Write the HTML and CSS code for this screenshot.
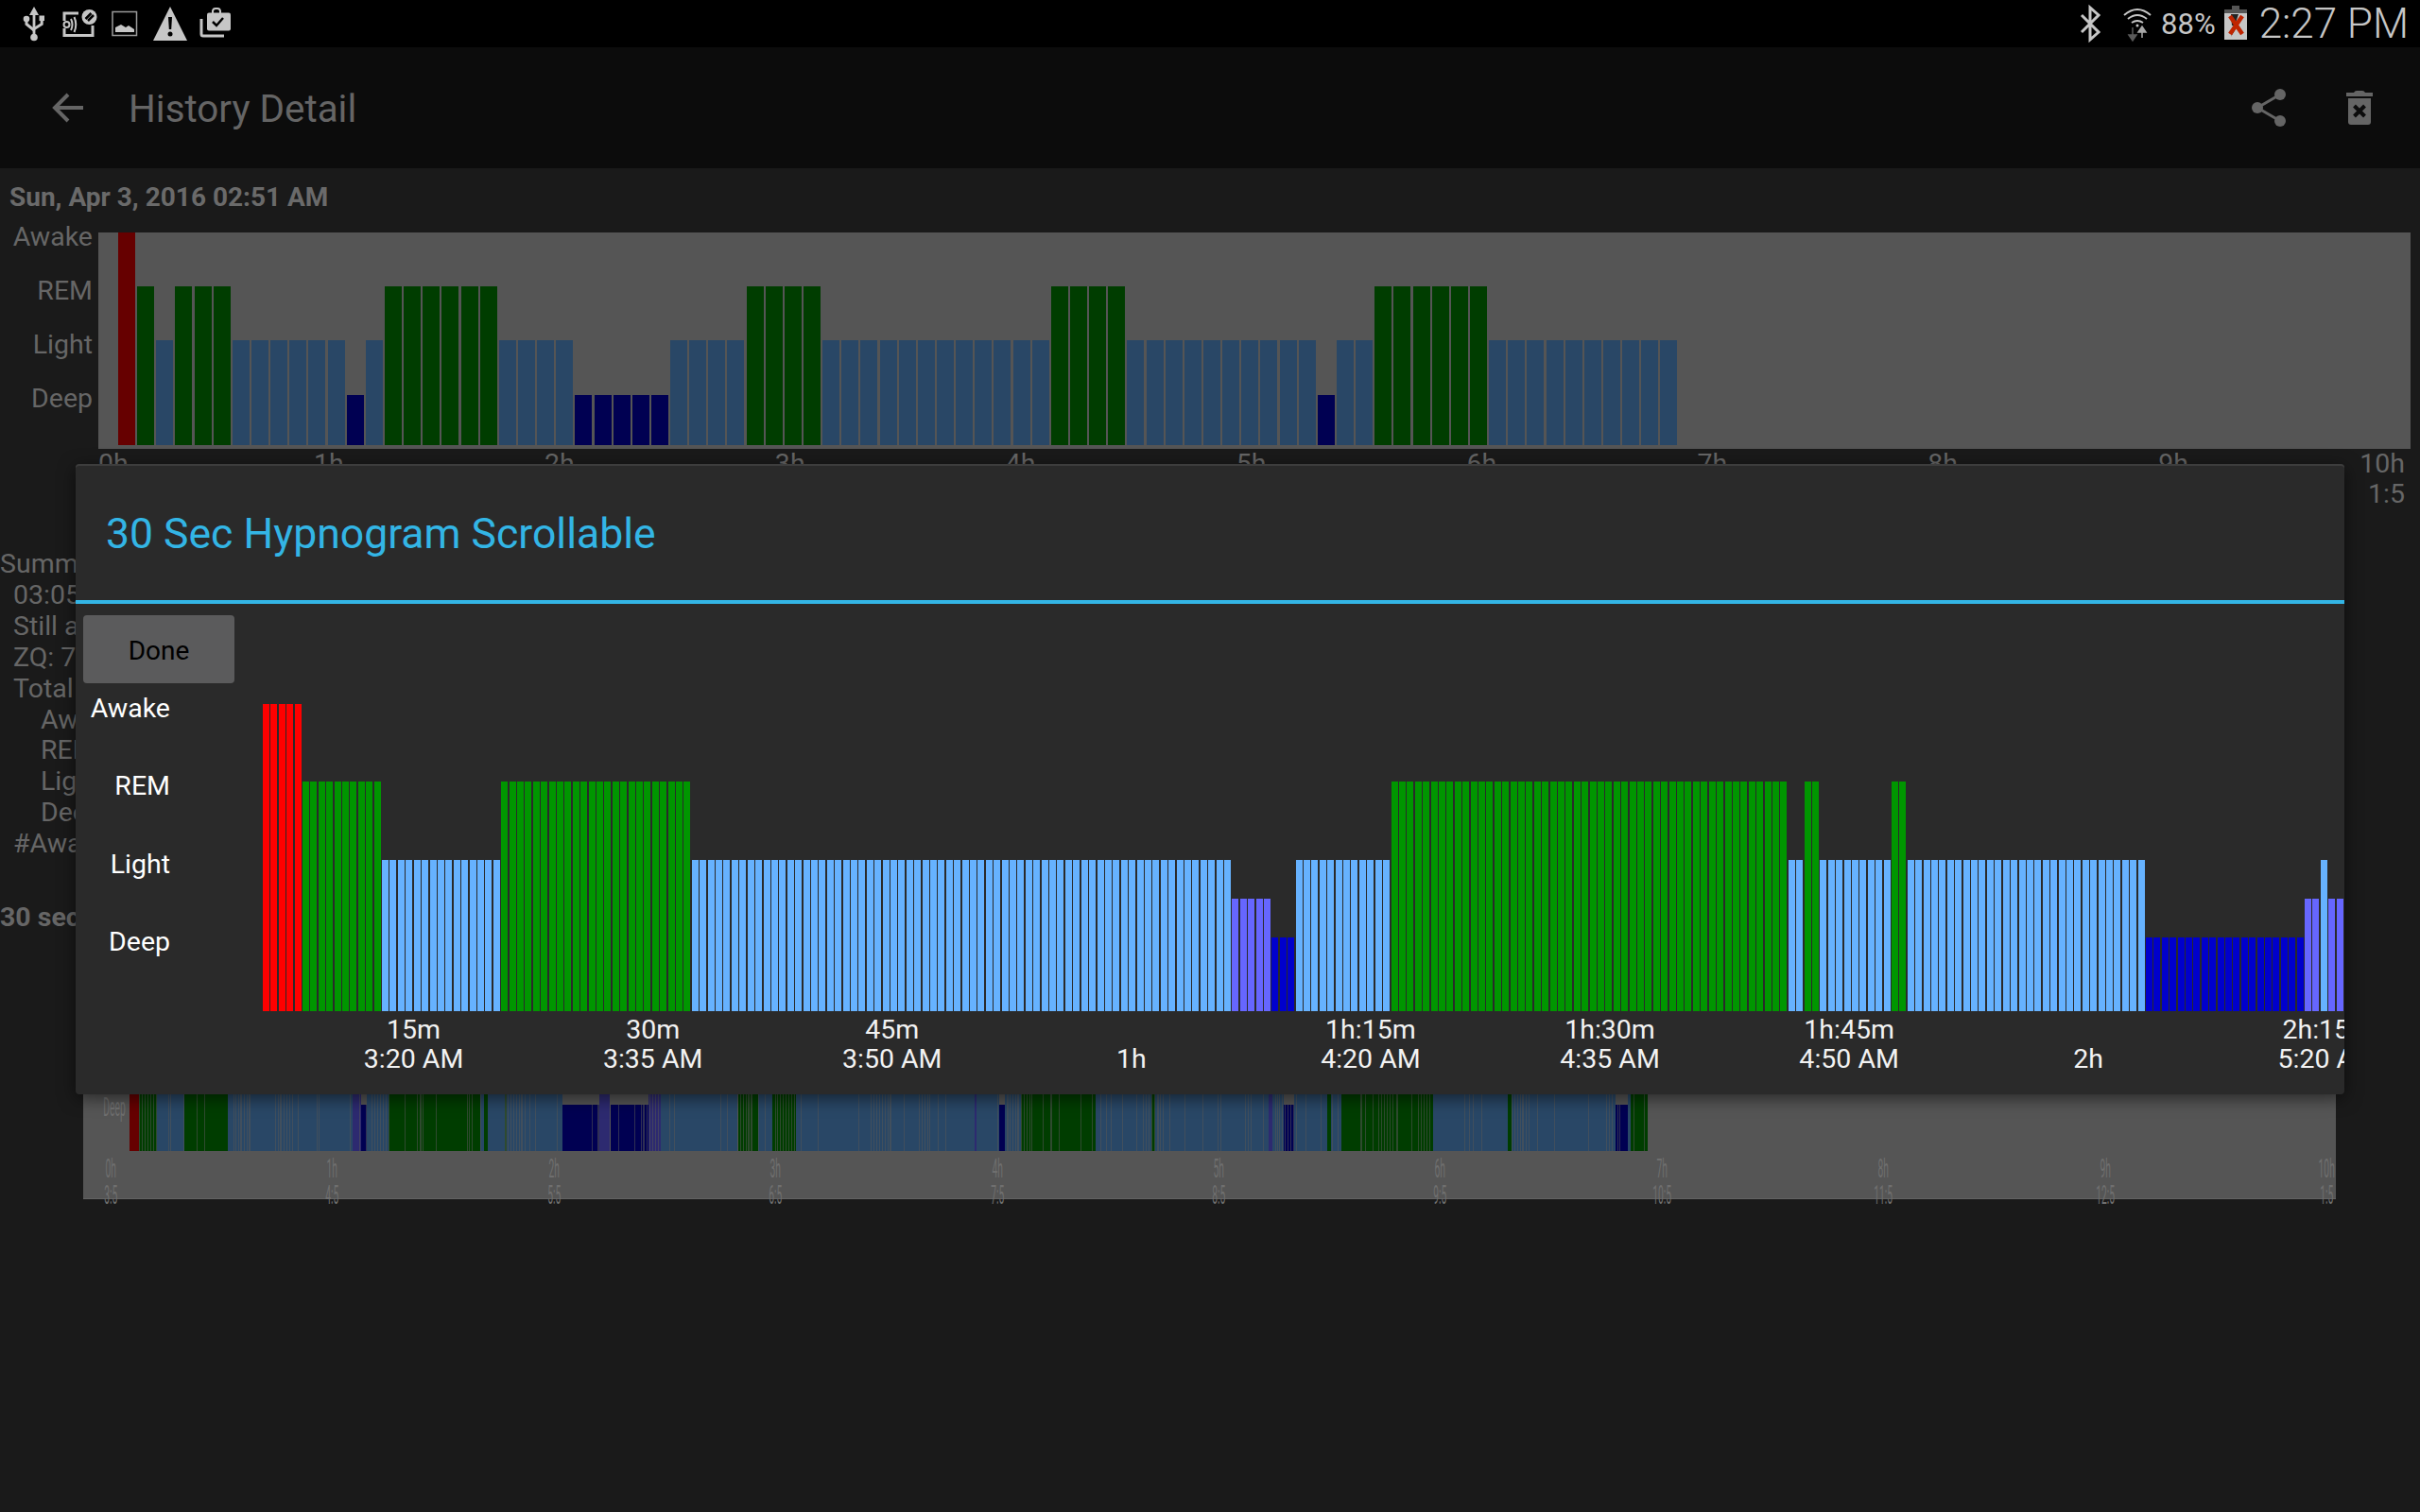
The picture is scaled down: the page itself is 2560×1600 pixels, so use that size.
FILE: index.html
```html
<!DOCTYPE html>
<html lang="en">
<head>
<meta charset="utf-8">
<title>History Detail</title>
<link rel="stylesheet" href="styles.css">
</head>
<body>
<div class="status">
  <div class="status-left">
    <svg class="ic" width="32" height="50" viewBox="20 0 32 50"><path d="M36 7l-5 9h3.6v20h2.8V16H41z" class="sf"/><circle cx="36" cy="39.500" r="3.800" class="sf"/><circle cx="28" cy="20" r="3.300" class="sf"/><rect x="41.500" y="16.500" width="5.500" height="5.500" class="sf"/><path d="M28 21v4.500l8 6.500M44.200 21v4.500l-8 5" class="ss"/></svg>
    <svg class="ic" width="46" height="50" viewBox="62 0 46 50"><path d="M68 22v-8h15M68 30v7.500h30V27" class="ss"/><circle cx="70.500" cy="26" r="3" class="ss2"/><path d="M75 20q3 6 0 12M78.500 18q3.500 8 0 16" class="ss2"/><circle cx="94.500" cy="18" r="8" class="sf"/><path d="M90.500 20l6-6M93 22l6-6" class="dark"/></svg>
    <svg class="ic" width="32" height="50" viewBox="118 0 32 50"><rect x="119" y="12.500" width="25.500" height="25" class="sthin"/><path d="M122 34v-5l6-3 5 3 3-2 6 4v3z" class="sf"/></svg>
    <svg class="ic" width="40" height="50" viewBox="160 0 40 50"><path d="M180 7l18 36h-36z" class="sf"/><path d="M178 18h4l-.8 13h-2.400z" class="bk"/><circle cx="180" cy="36" r="2.500" class="bk"/></svg>
    <svg class="ic" width="36" height="50" viewBox="210 0 36 50"><path d="M213 20v16a2 2 0 0 0 2 2h22" class="ss"/><path d="M225 14v-2.500a3 3 0 0 1 3-2.500h2a3 3 0 0 1 3 2.500V14" class="ss2"/><rect x="219" y="13.500" width="25" height="19" rx="2" class="sf"/><path d="M225 23l4 4 7-8" class="dark"/></svg>
  </div>
  <div class="status-right">
    <svg class="ic" width="34" height="50" viewBox="2196 0 34 50"><path d="M2203 16l18 18-9 8V8l9 8-18 18" class="ss"/></svg>
    <svg class="ic wifi" width="36" height="50" viewBox="2244 0 36 50"><path d="M2248 16q14-12 28 0M2252 20q10-8 20 0M2256 24q6-4 12 0" class="ss2"/><circle cx="2262" cy="27" r="1.500" class="sf"/><path d="M2257 29v9M2253 37l4 6 4-6z" class="arrow-dim"/><path d="M2267 40v-8M2263 34l4-6 4 6z" class="arrow-lit"/></svg>
    <span class="batt-pct">88%</span>
    <svg class="ic batt" width="28" height="50" viewBox="2354 0 28 50"><rect x="2364" y="6" width="8" height="5" fill="#555"/><rect x="2356" y="10" width="24" height="4" fill="#555"/><rect x="2356" y="14" width="24" height="28" fill="#c6c6c6"/><path d="M2371 15l-8 0 1 12 4 0-5 12 9-15-4 0z" fill="#222"/><path d="M2362 17l13 19M2375 17l-13 19" stroke="#c02400" stroke-width="4.500" fill="none"/></svg>
    <span class="clock">2:27 PM</span>
  </div>
</div>

<header class="appbar">
  <svg class="back" width="48" height="48" viewBox="48 90 48 48"><path d="M88 114H60M72 100l-14 14 14 14" class="dim-line"/></svg>
  <h1 class="title">History Detail</h1>
  <svg class="share" width="48" height="48" viewBox="2376 90 48 48"><path d="M2412 100l-24 14 24 14" class="dim-line thin"/><circle cx="2412" cy="100" r="6" class="dim-fill"/><circle cx="2388" cy="114" r="6" class="dim-fill"/><circle cx="2412" cy="128" r="6" class="dim-fill"/></svg>
  <svg class="trash" width="44" height="48" viewBox="2474 90 44 48"><path d="M2482 98h8q1-2 3-2h6q2 0 3 2h8v4h-28z" class="dim-fill"/><path d="M2484 104h24v25q0 3-3 3h-18q-3 0-3-3z" class="dim-fill"/><path d="M2490.500 112l11 11M2501.500 112l-11 11" class="trash-x"/></svg>
</header>

<main class="content">
  <div class="date">Sun, Apr 3, 2016 02:51 AM</div>
  <div class="top-row">
    <div class="top-labels"><span>Awake</span><span>REM</span><span>Light</span><span>Deep</span></div>
    <div class="top-chart"><svg id="topBars" class="bars" width="2446" height="229"></svg></div>
  </div>
  <div class="top-axis">
    <div class="tick tick-first">0h<br>3:5</div>
    <div class="tick">1h<br>4:5</div><div class="tick">2h<br>5:5</div><div class="tick">3h<br>6:5</div>
    <div class="tick">4h<br>7:5</div><div class="tick">5h<br>8:5</div><div class="tick">6h<br>9:5</div>
    <div class="tick">7h<br>10:5</div><div class="tick">8h<br>11:5</div><div class="tick">9h<br>12:5</div>
    <div class="tick tick-last">10h<br>1:5</div>
  </div>
  <div class="summary">
    <div>Summary</div>
    <div class="in1">03:05</div>
    <div class="in1">Still a</div>
    <div class="in1">ZQ: 7</div>
    <div class="in1">Total</div>
    <div class="in2">Awake</div>
    <div class="in2">REM</div>
    <div class="in2">Light</div>
    <div class="in2">Deep</div>
    <div class="in1">#Awa</div>
    <div class="sec30">30 sec</div>
  </div>
  <div class="mini-chart">
    <svg id="miniBars" class="bars" width="2383" height="269"></svg>
    <span class="mini-deep squish">Deep</span>
    <div class="mini-axis">
      <div class="mtick"><span class="squish">0h</span><span class="squish">3:5</span></div>
      <div class="mtick"><span class="squish">1h</span><span class="squish">4:5</span></div>
      <div class="mtick"><span class="squish">2h</span><span class="squish">5:5</span></div>
      <div class="mtick"><span class="squish">3h</span><span class="squish">6:5</span></div>
      <div class="mtick"><span class="squish">4h</span><span class="squish">7:5</span></div>
      <div class="mtick"><span class="squish">5h</span><span class="squish">8:5</span></div>
      <div class="mtick"><span class="squish">6h</span><span class="squish">9:5</span></div>
      <div class="mtick"><span class="squish">7h</span><span class="squish">10:5</span></div>
      <div class="mtick"><span class="squish">8h</span><span class="squish">11:5</span></div>
      <div class="mtick"><span class="squish">9h</span><span class="squish">12:5</span></div>
      <div class="mtick"><span class="squish">10h</span><span class="squish">1:5</span></div>
    </div>
  </div>
</main>

<section class="dialog">
  <div class="dialog-title">30 Sec Hypnogram Scrollable</div>
  <button class="done">Done</button>
  <div class="plot">
    <div class="plot-labels"><span>Awake</span><span>REM</span><span>Light</span><span>Deep</span></div>
    <svg id="hypno" class="bars hypno" width="2202" height="325"></svg>
  </div>
  <div class="time-axis">
    <div class="ttick">15m<br>3:20 AM</div>
    <div class="ttick">30m<br>3:35 AM</div>
    <div class="ttick">45m<br>3:50 AM</div>
    <div class="ttick"><br>1h</div>
    <div class="ttick">1h:15m<br>4:20 AM</div>
    <div class="ttick">1h:30m<br>4:35 AM</div>
    <div class="ttick">1h:45m<br>4:50 AM</div>
    <div class="ttick"><br>2h</div>
    <div class="ttick">2h:15m<br>5:20 AM</div>
  </div>
</section>
<script src="script.js"></script>
</body>
</html>
```

FILE: styles.css
```css
* { box-sizing: border-box; }
html, body { margin: 0; padding: 0; }
body {
  width: 2560px;
  height: 1600px;
  overflow: hidden;
  position: relative;
  background: #1a1a1a;
  color: #666;
  font-family: Roboto, "Liberation Sans", sans-serif;
  font-size: 28.500px;
}
.status {
  height: 50px;
  background: #000;
  display: flex;
  justify-content: space-between;
  align-items: center;
  padding: 0 12px 0 20px;
  color: #c6c6c6;
}
.status-left { display: flex; gap: 10px; }
.status-right { display: flex; align-items: center; }
.ic { display: block; flex: none; }
.wifi { margin-left: 14px; }
.batt-pct { margin-left: 7px; font-size: 31px; }
.batt { margin-left: 7px; }
.clock { margin-left: 11px; font-size: 44px; font-weight: 300; line-height: 50px; }
.sf { fill: #c6c6c6; }
.bk { fill: #000; }
.ss { fill: none; stroke: #c6c6c6; stroke-width: 3; }
.ss2 { fill: none; stroke: #c6c6c6; stroke-width: 2; }
.sthin { fill: none; stroke: #9a9a9a; stroke-width: 1.500; }
.dark { fill: none; stroke: #000; stroke-width: 2.500; }
.arrow-dim { fill: #5a5a5a; stroke: #5a5a5a; stroke-width: 1.500; }
.arrow-lit { fill: #a8a8a8; stroke: #a8a8a8; stroke-width: 1.500; }

.appbar {
  height: 128px;
  background: #0c0c0c;
  display: flex;
  align-items: center;
  padding: 0 42px 0 48px;
}
.back, .share, .trash { flex: none; display: block; }
.title {
  margin: 2px 0 0 40px;
  font-size: 40.400px;
  font-weight: 400;
  color: #656565;
  flex: 1;
}
.trash { margin-left: 50px; }
.dim-line { fill: none; stroke: #656565; stroke-width: 4; }
.dim-line.thin { stroke-width: 3; }
.dim-fill { fill: #656565; }
.trash-x { fill: none; stroke: #0c0c0c; stroke-width: 4; }

.content { display: block; }
.date {
  height: 60px;
  line-height: 62px;
  padding-left: 10px;
  font-size: 28px;
  font-weight: 700;
  color: #6a6a6a;
  white-space: nowrap;
}
.top-row { display: flex; margin-top: 8px; height: 229px; }
.top-labels {
  flex: none;
  width: 98px;
  margin: -24px 6px 0 0;
  display: flex;
  flex-direction: column;
  align-items: flex-end;
  line-height: 57px;
  color: #666;
}
.top-chart { width: 2446px; height: 229px; background: #555; }
.bars { display: block; shape-rendering: crispEdges; }
.top-axis {
  display: flex;
  height: 64px;
  margin-left: 104px;
  width: 2440px;
  line-height: 32px;
  color: #666;
}
.tick { flex: none; width: 243.900px; text-align: center; }
.tick-first { width: 122px; text-align: left; }
.tick-last { flex: 1; width: auto; text-align: right; }
.summary {
  margin-top: 42px;
  line-height: 32.900px;
  color: #666;
  white-space: nowrap;
}
.in1 { padding-left: 14px; }
.in2 { padding-left: 43px; }
.sec30 { font-weight: 700; margin-top: 45px; }
.mini-chart {
  position: relative;
  margin: 12px 0 0 88px;
  width: 2383px;
  height: 269px;
  background: #555;
  border-bottom: 1px solid #626262;
}
.squish { display: block; transform: scaleX(.36); white-space: nowrap; color: #6f6f6f; }
.mini-deep {
  position: absolute;
  left: -2px;
  width: 70px;
  top: 157px;
  line-height: 30px;
  text-align: center;
}
.mini-axis {
  position: absolute;
  left: -88px;
  top: 223px;
  display: flex;
  line-height: 28px;
}
.mtick { flex: none; width: 234.400px; text-align: center; }

.dialog {
  position: absolute;
  left: 80px;
  top: 491px;
  width: 2400px;
  height: 667px;
  background: #2a2a2a;
  border-radius: 4px;
  overflow: hidden;
  box-shadow: 0 4px 18px rgba(0, 0, 0, .55), inset 0 2px 0 #3d3d3d;
}
.dialog-title {
  height: 148px;
  line-height: 148px;
  padding-left: 32px;
  font-size: 44.500px;
  color: #33b5e5;
  border-bottom: 4px solid #33b5e5;
}
.done {
  display: block;
  width: 160px;
  height: 72px;
  margin: 12px 0 0 8px;
  border: 0;
  border-radius: 4px;
  background: #5b5b5c;
  color: #000;
  font-family: inherit;
  font-size: 28px;
  padding: 2px 0 0;
}
.plot { display: flex; margin-top: 22px; height: 325px; }
.plot-labels {
  flex: none;
  width: 100px;
  margin: -12px 98px 0 0;
  display: flex;
  flex-direction: column;
  align-items: flex-end;
  gap: 48.300px;
  line-height: 34px;
  color: #fff;
}
.hypno { flex: none; }
.time-axis {
  display: flex;
  margin: 4px 0 0 231px;
  line-height: 31px;
  color: #f2f2f2;
  white-space: nowrap;
}
.ttick { flex: none; width: 253.100px; text-align: center; }
```

FILE: script.js
```js
(function () {
  var NS = 'http://www.w3.org/2000/svg';
  function rect(svg, x, y, w, h, fill, op) {
    var r = document.createElementNS(NS, 'rect');
    r.setAttribute('x', x); r.setAttribute('y', y);
    r.setAttribute('width', w); r.setAttribute('height', h);
    r.setAttribute('fill', fill);
    if (op) r.setAttribute('opacity', op);
    svg.appendChild(r);
  }
  function runs(svg, list, x0, period, width, bottom, tops, colors) {
    var i = 0;
    list.forEach(function (seg) {
      for (var n = 0; n < seg[1]; n++, i++) {
        var x = Math.round(x0 + i * period);
        rect(svg, x, tops[seg[0]], width, bottom - tops[seg[0]], colors[seg[0]]);
      }
    });
  }

  runs(document.getElementById('topBars'),
    [['A',1],['R',1],['L',1],['R',3],['L',6],['D',1],['L',1],['R',6],['L',4],['D',5],
     ['L',4],['R',4],['L',12],['R',4],['L',10],['D',1],['L',2],['R',6],['L',10]],
    21, 20.14, 18, 225,
    { A: 0, R: 57, L: 114, D: 172 },
    { A: '#660000', R: '#003d00', L: '#294766', D: '#000052' });

  runs(document.getElementById('hypno'),
    [['A',5],['R',10],['L',15],['R',24],['L',68],['P',5],['D',3],['L',12],['R',50],
     ['L',2],['R',2],['L',9],['R',2],['L',30],['D',20],['P',2],['L',1],['P',2]],
    0, 8.405, 7, 325,
    { A: 0, R: 82, L: 165, P: 206, D: 247 },
    { A: '#ff0000', R: '#009600', L: '#66b2ff', P: '#6666ff', D: '#0000cc' });

  // Overview strip: [stage, screen x start, screen x end]
  var mini = document.getElementById('miniBars');
  var cols = { A: '#660000', R: '#003d00', L: '#294766', P: '#2d2a70', D: '#000052' };
  var strip = [
    ['A',137,147],['R',147,166],['L',166,195],['R',195,241],['L',241,373],['P',373,382],
    ['D',382,388],['L',388,411],['R',411,508],['L',508,512],['R',512,516],['L',516,534],
    ['R',534,536],['L',536,595],['D',595,634],['P',634,645],['D',646,686],['P',686,699],
    ['L',699,780],['R',781,802],['L',802,817],['R',817,842],['L',842,1031],['P',1031,1033],
    ['L',1033,1057],['D',1057,1063],['L',1063,1080],['R',1080,1159],['L',1159,1218],
    ['R',1218,1222],['L',1222,1342],['P',1342,1346],['L',1346,1358],['D',1358,1369],
    ['L',1369,1404],['R',1404,1408],['L',1408,1419],['R',1419,1516],['L',1516,1595],
    ['R',1595,1599],['L',1599,1709],['D',1709,1722],['L',1722,1725],['R',1725,1743]
  ];
  strip.forEach(function (s) {
    var top = s[0] === 'D' ? 169 : 0;
    rect(mini, s[1] - 88, top, s[2] - s[1], 218 - top, cols[s[0]]);
    for (var x = s[1]; x < s[2]; x++) {
      var n = Math.sin(x * 0.13) + Math.sin(x * 0.047 + 1);
      var h = Math.sin(x * 12.9898) * 43758.5453; h -= Math.floor(h);
      if ((n > 0.9 && x % 3 === 0) || h > 0.93) {
        rect(mini, x - 88, top, 1, 218 - top, '#555555', '0.55');
      }
    }
  });
})();
```
